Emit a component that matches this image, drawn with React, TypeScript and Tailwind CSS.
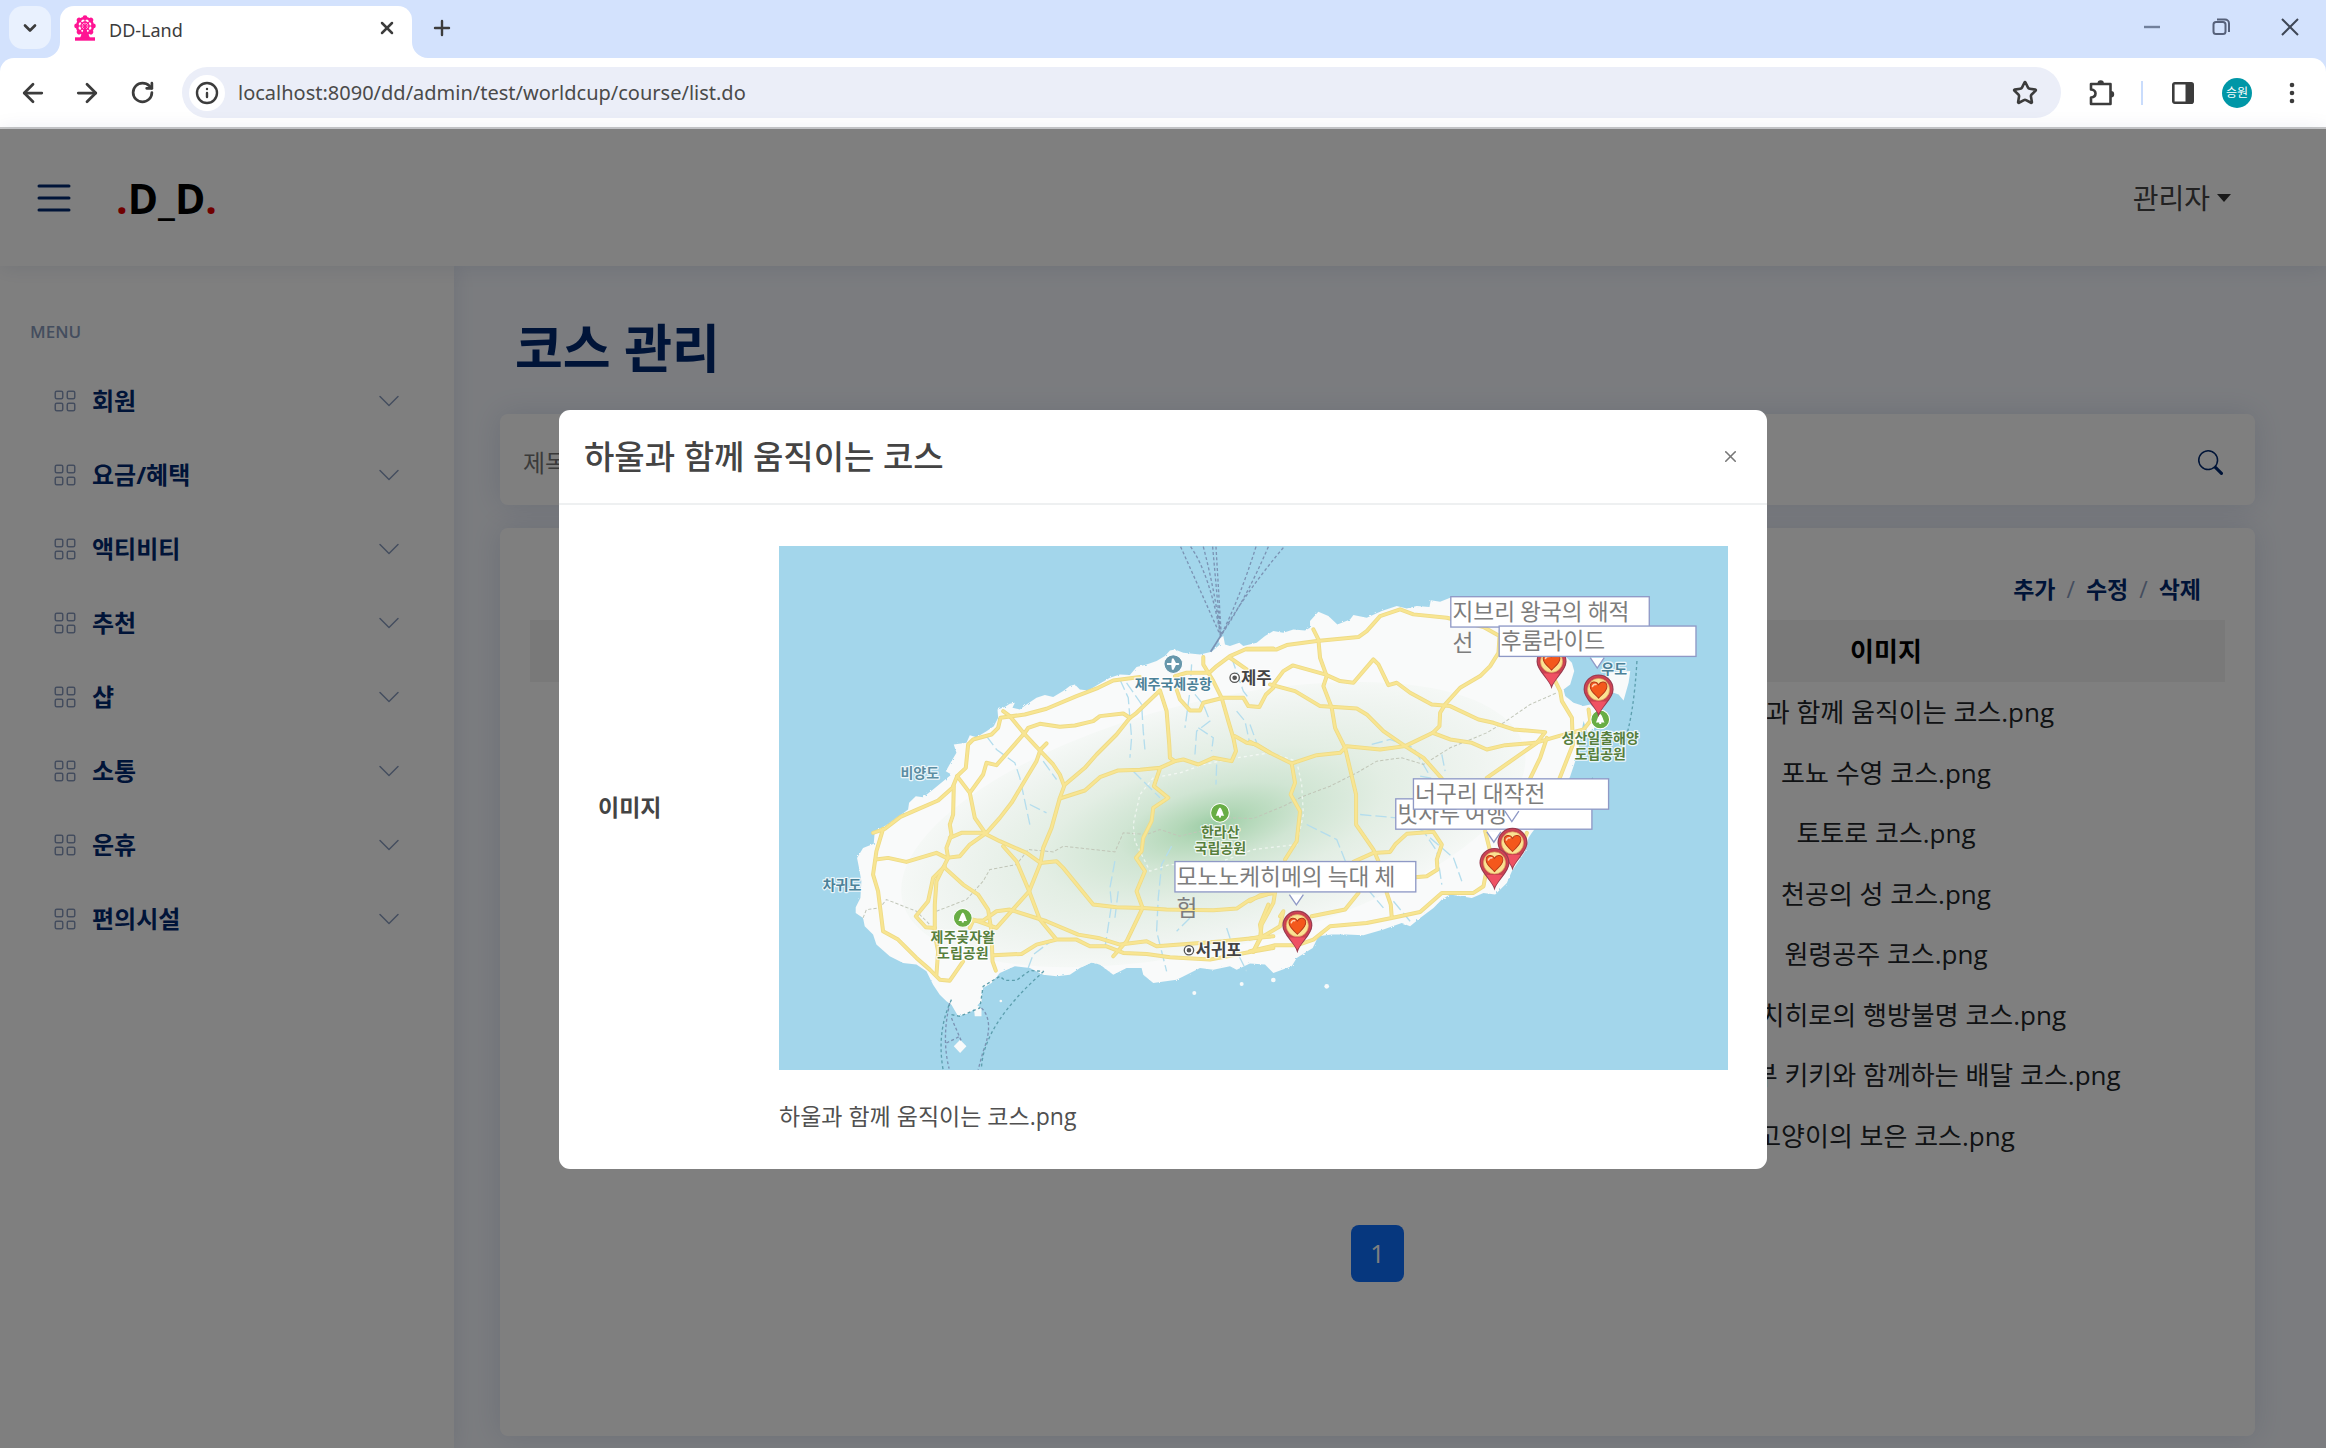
import React from "react";
import { ArrowLeft, ArrowRight, RotateCw, Info, Star, ChevronDown, X, Plus } from "lucide-react";
import { BsGrid, BsChevronDown, BsSearch, BsList } from "react-icons/bs";

const MENU = ["회원", "요금/혜택", "액티비티", "추천", "샵", "소통", "운휴", "편의시설"];

const FILES = [
  "하울과 함께 움직이는 코스.png",
  "포뇨 수영 코스.png",
  "토토로 코스.png",
  "천공의 성 코스.png",
  "원령공주 코스.png",
  "센과 치히로의 행방불명 코스.png",
  "마녀 배달부 키키와 함께하는 배달 코스.png",
  "고양이의 보은 코스.png",
];

function FerrisWheel() {
  const spokes = [0, 45, 90, 135, 180, 225, 270, 315];
  return (
    <svg viewBox="0 0 24 26" className="h-[26px] w-[24px]" fill="#ff1493" stroke="#ff1493" aria-hidden="true">
      <circle cx="12" cy="11" r="8" fill="none" strokeWidth="2.400" />
      <circle cx="12" cy="11" r="4" fill="none" strokeWidth="1.400" />
      {spokes.map((a) => (
        <g key={a} transform={`rotate(${a} 12 11)`}>
          <path d="M12 11V3" strokeWidth="1.200" />
          <circle cx="12" cy="2.600" r="2.400" stroke="none" />
        </g>
      ))}
      <path d="M12 11l-5 12h10z" stroke="none" />
      <path d="M2 24h20" strokeWidth="3.400" />
    </svg>
  );
}

function BrowserChrome() {
  return (
    <header className="bg-[#d3e2fd] text-[#3c3c3c]">
      <div className="flex h-[58px] items-start">
        <button type="button" aria-label="탭 검색" className="mt-[6px] ml-[9px] flex h-[43px] w-[42px] items-center justify-center rounded-[14px] bg-[#e9f1fe]">
          <ChevronDown size={20} strokeWidth={3.2} />
        </button>
        <div className="relative mt-[6px] ml-[9px] flex h-[52px] w-[352px] items-center rounded-t-[14px] bg-white pr-[15px] pb-2 pl-[13px]">
          <svg viewBox="0 0 16 16" className="absolute bottom-0 -left-4 h-4 w-4" aria-hidden="true"><path d="M16 0v16H0A16 16 0 0 0 16 0z" fill="#fff" /></svg>
          <svg viewBox="0 0 16 16" className="absolute -right-4 bottom-0 h-4 w-4" aria-hidden="true"><path d="M0 0v16h16A16 16 0 0 1 0 0z" fill="#fff" /></svg>
          <FerrisWheel />
          <span className="ml-[12px] flex-1 pt-1 font-['Noto_Sans'] text-[18px] leading-6">DD-Land</span>
          <button type="button" aria-label="탭 닫기"><X size={20} strokeWidth={3} /></button>
        </div>
        <button type="button" aria-label="새 탭" className="mt-[16px] ml-[18px]"><Plus size={24} strokeWidth={2.4} /></button>
        <div className="mt-[15px] mr-[24px] ml-auto flex items-center gap-[45px]">
          <button type="button" aria-label="최소화">
            <svg viewBox="0 0 24 24" className="size-6"><path d="M4 12h16" stroke="#71809b" strokeWidth="2.400" /></svg>
          </button>
          <button type="button" aria-label="이전 크기로">
            <svg viewBox="0 0 24 24" className="size-6" fill="none" stroke="#56617a" strokeWidth="2">
              <rect x="4.500" y="7" width="12" height="12" rx="2.500" />
              <path d="M8 4.500h8a4 4 0 0 1 4 4V17" />
            </svg>
          </button>
          <button type="button" aria-label="닫기">
            <svg viewBox="0 0 24 24" className="size-6"><path d="M4 4l16 16M20 4L4 20" stroke="#3f4756" strokeWidth="2" /></svg>
          </button>
        </div>
      </div>
      <div className="flex h-[71px] items-center rounded-t-[14px] border-b-2 border-[#c8c8c8] bg-white pl-[18px]">
        <button type="button" aria-label="뒤로"><ArrowLeft size={30} strokeWidth={2.2} /></button>
        <button type="button" aria-label="앞으로" className="ml-[24px]"><ArrowRight size={30} strokeWidth={2.2} /></button>
        <button type="button" aria-label="새로고침" className="ml-[28px]"><RotateCw size={25} strokeWidth={2.6} /></button>
        <div className="ml-[27px] flex h-[51px] flex-1 items-center rounded-full bg-[#ebeef8] pr-[23px] pl-[7px]">
          <span className="flex size-9 items-center justify-center rounded-full bg-white"><Info size={24} strokeWidth={2.4} /></span>
          <input
            aria-label="주소"
            defaultValue="localhost:8090/dd/admin/test/worldcup/course/list.do"
            className="ml-[13px] h-9 flex-1 bg-transparent font-['Noto_Sans'] text-[20px] text-[#4a4a4a] outline-none"
          />
          <button type="button" aria-label="북마크"><Star size={26} strokeWidth={2.4} /></button>
        </div>
        <div className="flex items-center pr-[20px] pl-[26px]">
          <button type="button" aria-label="확장 프로그램">
            <svg viewBox="0 0 28 28" className="size-7" fill="none" stroke="#3c3c3c" strokeWidth="2.600" strokeLinejoin="round">
              <path d="M4 5h19.500v20H4v-6.500q4.500-.5 4.500-4T4 10.500z" />
              <path d="M10.500 4.500a3.200 3.200 0 0 1 6.400 0zM24 12a3.200 3.200 0 0 1 0 6.400z" fill="#3c3c3c" stroke="none" />
            </svg>
          </button>
          <span className="ml-[26px] h-6 w-[2px] bg-[#c9dcfc]" />
          <button type="button" aria-label="측면 패널" className="ml-[27px]">
            <svg viewBox="0 0 26 26" className="size-[26px]" fill="none" stroke="#3c3c3c" strokeWidth="2.600">
              <rect x="3.300" y="3.300" width="19.400" height="19.400" rx="1.500" />
              <path d="M15.500 3.300h7.200v19.400h-7.200z" fill="#3c3c3c" stroke="none" />
            </svg>
          </button>
          <button type="button" className="ml-[26px] flex size-[30px] items-center justify-center rounded-full bg-[#0097a7] text-[12px] text-white">승원</button>
          <button type="button" aria-label="메뉴" className="ml-[26px]">
            <svg viewBox="0 0 28 28" className="size-7" fill="#3c3c3c"><circle cx="14" cy="6" r="2.300" /><circle cx="14" cy="14" r="2.300" /><circle cx="14" cy="22" r="2.300" /></svg>
          </button>
        </div>
      </div>
    </header>
  );
}

function SiteHeader() {
  return (
    <div className="relative flex h-[137px] items-center bg-white pr-[95px] pl-[30px] shadow-[0_2px_20px_rgba(1,41,112,0.1)]">
      <button type="button" aria-label="메뉴 열기" className="text-[#012970]"><BsList size={48} /></button>
      <a href="#home" className="ml-[38px] text-[41px] leading-[60px] font-bold text-black">
        <span className="text-[#e00000]">.</span>D_D<span className="text-[#e00000]">.</span>
      </a>
      <button type="button" className="ml-auto flex items-center gap-[7px] text-[28px] leading-9 text-[#444]">
        관리자
        <span className="border-x-[7px] border-t-[8px] border-x-transparent border-t-[#333]" />
      </button>
    </div>
  );
}

function Sidebar() {
  return (
    <nav className="w-[454px] shrink-0 bg-white pt-[54px] shadow-[0_0_20px_rgba(1,41,112,0.1)]">
      <p className="pl-[30px] text-[17px] leading-6 font-semibold text-[#899bbd]">MENU</p>
      <ul className="mt-[20px]">
        {MENU.map((m) => (
          <li key={m}>
            <button type="button" className="flex h-[74px] w-full items-center pr-[53px] pl-[53px] text-[#899bbd]">
              <BsGrid size={24} />
              <span className="ml-[15px] text-[24px] font-bold text-[#012970]">{m}</span>
              <BsChevronDown size={24} className="ml-auto" />
            </button>
          </li>
        ))}
      </ul>
    </nav>
  );
}

function CoursePage() {
  return (
    <main className="flex flex-1 flex-col pt-[52px] pr-[71px] pb-[12px] pl-[46px]">
      <h1 className="pl-[15px] text-[52px] leading-[60px] font-bold text-[#012970]">코스 관리</h1>
      <form className="mt-[36px] flex h-[91px] items-center rounded-[8px] bg-white pt-[5px] pr-[32px] pl-[23px] shadow-[0_0_30px_rgba(1,41,112,0.12)]">
        <input aria-label="제목" placeholder="제목" className="h-12 flex-1 text-[24px] outline-none placeholder:text-[#757575]" />
        <button type="submit" aria-label="검색" className="text-[#012970]"><BsSearch size={25} /></button>
      </form>
      <section className="mt-[23px] flex flex-1 flex-col rounded-[8px] bg-white px-[30px] pt-[46px] shadow-[0_0_30px_rgba(1,41,112,0.12)]">
        <div className="flex justify-end gap-[11px] pr-[24px] text-[23px] leading-[30px] font-bold text-[#012970]">
          <a href="#add">추가</a>
          <span className="font-normal text-[#899bbd]">/</span>
          <a href="#edit">수정</a>
          <span className="font-normal text-[#899bbd]">/</span>
          <a href="#delete">삭제</a>
        </div>
        <table className="mt-[16px] h-[546px] w-full table-fixed text-center text-[26px] leading-9 text-[#212529]">
          <thead>
            <tr className="h-[62px] bg-[#f2f2f2] text-black">
              <td className="w-[60%]" />
              <th scope="col" className="w-[40%] font-bold">이미지</th>
            </tr>
          </thead>
          <tbody>
            {FILES.map((f) => (
              <tr key={f}>
                <td />
                <td className="whitespace-nowrap">{f}</td>
              </tr>
            ))}
          </tbody>
        </table>
        <div className="mt-[59px] flex justify-center">
          <button type="button" className="h-[57px] w-[53px] rounded-[8px] bg-[#0d6efd] text-[25px] text-white">1</button>
        </div>
      </section>
    </main>
  );
}

const COAST =
  "M258 1128L272 1100L275 1050L268 1010L262 980L280 950L312 938L315 900L345 885L395 850L415 835L418 815L438 795L460 798L490 775L520 750L545 730L528 720L548 685L560 665L552 640L590 635L600 612L620 618L650 600L672 585L685 560L683 535L705 528L720 518L735 515L728 530L750 535L770 520L800 500L825 492L850 498L880 480L900 465L915 460L930 475L955 478L985 460L1020 440L1050 430L1080 432L1100 408L1130 400L1160 390L1185 375L1200 358L1215 355L1240 365L1290 370L1325 362L1350 340L1345 325L1360 315L1365 340L1380 345L1408 335L1420 345L1460 335L1485 315L1510 300L1540 305L1570 295L1605 298L1620 290L1620 270L1645 242L1675 255L1702 280L1740 265L1750 252L1790 260L1835 240L1880 225L1910 232L1940 225L1978 228L1982 208L2010 212L2040 200L2140 200L2240 240L2320 300L2380 370L2405 395L2412 420L2400 460L2380 475L2385 495L2410 515L2440 525L2460 520L2480 540L2478 585L2452 605L2440 570L2430 620L2425 650L2415 690L2400 735L2370 800L2320 860L2285 905L2275 920L2265 960L2225 1020L2210 1055L2175 1090L2140 1085L2105 1100L2040 1090L2015 1105L1990 1130L1950 1160L1920 1185L1895 1175L1840 1195L1780 1212L1730 1210L1685 1210L1645 1215L1628 1250L1580 1280L1565 1305L1510 1325L1485 1300L1440 1297L1400 1315L1380 1305L1330 1315L1290 1310L1250 1330L1220 1345L1150 1355L1120 1330L1115 1310L1070 1310L1030 1330L990 1300L965 1294L930 1310L900 1330L860 1335L820 1330L780 1310L735 1305L690 1325L665 1355L640 1370L635 1410L600 1445L565 1455L545 1420L530 1410L510 1390L490 1360L470 1320L440 1300L400 1295L360 1275L320 1240L310 1210L285 1185L280 1160L258 1145Z";

const ROADS_NW = [
  "M310 905L345 893L392 857L440 836L505 808L548 770L562 735L588 710L595 640L610 625L665 610L685 590L692 560L765 550L830 533L920 495L985 470L1030 448L1110 438M1215 435L1250 425L1318 425L1340 405L1380 375L1430 353L1510 352",
  "M700 540L720 555L765 610L812 660L850 700L870 730L883 765L870 800L845 890L820 950L812 995L778 1080L720 1145L680 1190L610 1165",
  "M765 605L775 590L810 578L870 587L915 583L970 570L990 555L1060 547L1080 560L1040 610L980 670L945 710L883 762",
  "M1080 560L1100 545L1170 478L1190 540L1198 640L1200 680L1215 690L1240 685L1285 700L1330 680L1385 690L1398 660L1390 620L1375 570L1355 500L1330 450L1300 400L1300 378",
  "M870 802L945 778L990 738L1045 718L1110 716L1170 710L1215 690M1170 712L1152 765L1195 800L1150 830L1145 870L1120 920L1115 960L1098 980L1125 1020L1100 1080L1118 1130L1070 1230L1030 1275",
  "M765 605L680 702L650 695L640 730L600 785L562 735M600 785L615 860L650 910L690 930L770 965L812 995L860 990L880 1010L970 1120L1040 1128L1118 1130L1190 1135L1330 1137L1400 1132L1440 1105L1490 1090",
  "M830 637L812 655L800 690L770 740L725 815L690 860L650 905L600 940L570 975L530 980L500 965L410 992L355 980L318 985",
  "M552 765L550 850L540 880L545 910L530 950L535 980L520 1010L500 1050L495 1120L495 1210L505 1260L500 1330",
  "M645 905L575 905L540 920M525 1005L490 1040L475 1110L438 1155L468 1188L495 1190",
  "M340 893L320 960L310 1030L325 1080L340 1200L385 1225L440 1280L480 1315L510 1345L540 1348L580 1290M340 893",
  "M525 1010L580 1060L625 1090L655 1135L665 1200L668 1290L678 1318M600 1190L610 1168L640 1168L680 1140L720 1135L830 1170L925 1210L985 1220L1050 1240L1130 1230L1160 1245L1230 1240L1360 1230L1440 1222L1510 1215",
  "M700 945L740 990L778 1080L810 1165L860 1225L800 1240L755 1268L670 1272M860 1225L920 1225L960 1245L1010 1245L1060 1265L1130 1268L1200 1278L1320 1285L1440 1262L1510 1250",
  "M1380 380L1430 415M1220 475L1230 505L1260 538L1290 538L1300 515L1360 500L1420 500L1435 525L1468 528L1488 490L1510 470M1395 615L1430 635L1460 640L1500 665",
  "M1495 1120L1470 1180L1475 1215L1450 1262",
];
const ROADS_NE = [
  "M-10 355L80 355L110 342L200 330L325 318L350 300L390 255L450 235L490 250L590 260L700 288L748 315L745 365L720 405L690 435L630 470L585 520L570 545L568 585L548 605L465 645",
  "M190 295L205 325L210 380L230 435L220 465L245 530L255 590L285 650L318 790L318 880L370 955L385 990",
  "M70 460L100 420L128 403L225 430L270 450L310 455L370 385L385 400L415 462L440 455L480 485L545 520L600 525L685 565L730 575L790 595L885 603L860 635L710 740",
  "M60 460L135 480L210 525L320 532L350 550L400 600L465 645L390 655L290 645L270 665L200 672L125 697L60 665L0 632",
  "M465 645L520 680L575 742M548 605L600 625L665 635L710 655L765 642L855 635L925 615L1000 595L1020 570L1015 535M890 620L870 680L840 742",
  "M910 440L930 480L935 510L965 560L968 640L928 742M125 697L135 755L122 790L150 840L140 930L105 985",
];
const ROADS_SE = [
  "M310 182L370 155L420 152L435 130L470 98L550 92L575 130L560 175L562 205L530 225L495 228",
  "M0 412L40 405L90 375L100 330L90 345M185 345L285 325L325 275M410 275L422 310L425 350M0 450L75 432L140 432L190 415L240 375L350 365L425 350L510 332L575 275L670 275L700 255L720 150L705 90",
  "M75 275L70 305L35 370L30 410L10 450M830 95L815 130M0 300L30 282L75 275",
];
const STREAMS = [
  "M650 615L680 655L735 695L750 740L780 880M780 820L830 845M1050 445L1075 500L1085 620L1080 680M1070 455L1115 520L1120 600L1125 655M1265 400L1260 480L1245 590M1275 490L1300 520L1320 570L1280 600L1275 670M1285 590L1330 620L1325 660M1385 380L1420 480L1435 500M1400 540L1425 570L1440 640M1340 700L1338 760M820 690L860 745M1090 720L1170 800",
  "M1035 990L1020 1070L1025 1120L1005 1250M1205 945L1175 1000L1165 1100L1160 1200L1190 1320M1045 1080L1035 1160M1260 1160L1220 1200M775 1310L790 1270L850 1225M1370 1190L1380 1220L1430 1320",
  "M1440 580L1460 635M1805 640L1860 625L1930 650L1980 735M1950 735L2030 750M2015 670L2025 720M1770 850L1880 860L1960 900L2000 960L2015 1060M1610 880L1700 925L1730 1000L1840 1130M1870 1110L1920 1170M1980 920L2050 980L2075 1050",
];

function Pin({ x, y }: { x: number; y: number }) {
  return (
    <g transform={`translate(${x} ${y})`}>
      <path d="M0 76C-8 50-43 28-43 0A43 43 0 0 1 43 0C43 28 8 50 0 76Z" fill="#ea4b5e" stroke="#9b3c50" strokeWidth="4" />
      <path d="M-40 0A40 40 0 0 1 40 0C40 16 28 30 20 40H-20C-28 30-40 16-40 0Z" fill="#c9414f" />
      <path d="M-24 36H24L0 72Z" fill="#ef5163" />
      <circle r="33" fill="#fbe293" stroke="#d9a05a" strokeWidth="2" />
      <path d="M0 26C-10 14-25 6-25-9C-25-24-7-27 0-14C7-27 25-24 25-9C25 6 10 14 0 26Z" fill="#f4581c" stroke="#b8391a" strokeWidth="3" />
      <path d="M-18-9A8 8 0 0 1-8-15" fill="none" stroke="#ffd0b0" strokeWidth="5" strokeLinecap="round" />
    </g>
  );
}

function Park({ x, y }: { x: number; y: number }) {
  return (
    <g transform={`translate(${x} ${y})`}>
      <circle r="28" fill="#68ad45" stroke="#fff" strokeWidth="3" />
      <path d="M0-16C8-10 8 2 13 9H3V14H-3V9H-13C-8 2-8-10 0-16Z" fill="#fff" />
    </g>
  );
}

function MapText({ x, y, fill, size = 42, children }: { x: number; y: number; fill: string; size?: number; children: string }) {
  return (
    <text x={x} y={y} fontSize={size} fontWeight="bold" textAnchor="middle" fill={fill} stroke="#fff" strokeWidth="7" strokeOpacity="0.8" strokeLinejoin="round" paintOrder="stroke">
      {children}
    </text>
  );
}

function Callout({ x, y, w, label, rest }: { x: number; y: number; w: number; label: string; rest?: string }) {
  return (
    <g>
      <rect x={x} y={y} width={w} height="91" fill="#fff" stroke="#8f99c6" strokeWidth="4" />
      <text x={x + 5} y={y + 69} fontSize="68" fill="#7d7d7d">{label}</text>
      {rest && <text x={x + 5} y={y + 164} fontSize="68" fill="#7d7d7d">{rest}</text>}
    </g>
  );
}

function Arrow({ x, y }: { x: number; y: number }) {
  return <path d={`M${x - 21} ${y}L${x} ${y + 31}L${x + 21} ${y}`} fill="#fff" stroke="#8f99c6" strokeWidth="4" />;
}

function JejuMap() {
  return (
    <svg viewBox="28 45 2845 1571" className="block w-full font-['Noto_Sans_CJK_KR','Open_Sans',sans-serif]" role="img" aria-label="제주도 코스 지도">
      <defs>
        <radialGradient id="terrain">
          <stop offset="0" stopColor="#9ccda5" />
          <stop offset="0.12" stopColor="#b4d8b9" />
          <stop offset="0.3" stopColor="#d0e5d3" />
          <stop offset="0.55" stopColor="#e3eee4" />
          <stop offset="0.85" stopColor="#eff4f0" />
          <stop offset="1" stopColor="#f5f8f6" />
        </radialGradient>
        <filter id="rough" x="-5%" y="-5%" width="110%" height="110%">
          <feTurbulence type="fractalNoise" baseFrequency="0.12" numOctaves="2" seed="4" />
          <feDisplacementMap in="SourceGraphic" scale="7" />
        </filter>
        <clipPath id="island"><path d={COAST} /></clipPath>
      </defs>
      <rect x="28" y="45" width="2845" height="1571" fill="#a3d6eb" />
      <path d={COAST} fill="#f9fafa" filter="url(#rough)" />
      <g clipPath="url(#island)">
        <ellipse cx="1330" cy="880" rx="960" ry="370" fill="url(#terrain)" transform="rotate(-14 1330 880)" />
      </g>
      <g fill="#f8fafa">
        <path d="M2515 425L2580 420L2575 455L2560 508L2545 490L2515 480Z" />
        <path d="M571 1525L590 1545L571 1565L552 1545Z" />
        <path d="M620 1420L635 1430L635 1455L615 1455L612 1430Z" />
        <circle cx="1273" cy="1385" r="6" />
        <circle cx="1415" cy="1358" r="6" />
        <circle cx="1510" cy="1346" r="7" />
        <circle cx="1670" cy="1365" r="7" />
        <circle cx="693" cy="1409" r="4" />
      </g>
      <g fill="none" stroke="#b4dded" strokeWidth="4">
        {STREAMS.map((d) => <path key={d} d={d} strokeDasharray="34 12" />)}
      </g>
      <g fill="none" stroke="#c1c6b8" strokeWidth="3" strokeDasharray="10 6">
        <path d="M280 1160L290 1135L330 1130L350 1105L440 1140L480 1180M500 1140L590 1105L640 1050L660 1015L740 1000L775 955L850 962L880 945L1035 962L1060 905L1130 910L1170 895L1230 915L1330 890L1380 860L1450 862L1540 825L1600 795L1680 765L1760 725L1820 690L1895 680L1960 700L2040 650L2150 605L2200 575L2280 520L2360 485" />
      </g>
      <g fill="none" stroke="#fff" strokeWidth="4" strokeDasharray="9 9" opacity="0.6">
        <path d="M1095 930L1090 880L1110 790L1150 740L1230 725L1300 700L1400 680L1500 665L1580 690L1595 760L1600 850L1580 940L1450 955L1330 1000L1200 1000L1140 1020L1095 930" />
      </g>
      <g fill="none" stroke="#eedb86" strokeWidth="12" strokeLinejoin="round" strokeLinecap="round">
        {ROADS_NW.map((d) => <path key={d} d={d} />)}
        <g transform="translate(1440 0)">{ROADS_NE.map((d) => <path key={d} d={d} />)}</g>
        <g transform="translate(1440 810)">{ROADS_SE.map((d) => <path key={d} d={d} />)}</g>
      </g>
      <g fill="none" stroke="#f8e592" strokeWidth="7" strokeLinejoin="round" strokeLinecap="round">
        {ROADS_NW.map((d) => <path key={d} d={d} />)}
        <g transform="translate(1440 0)">{ROADS_NE.map((d) => <path key={d} d={d} />)}</g>
        <g transform="translate(1440 810)">{ROADS_SE.map((d) => <path key={d} d={d} />)}</g>
      </g>
      <g fill="none" stroke="#7b93b4" strokeWidth="4" strokeDasharray="9 7">
        <path d="M1232 47L1352 315M1262 47Q1320 130 1352 315M1300 47Q1335 180 1352 315M1328 47L1352 315M1338 47L1354 315M1458 47Q1410 200 1352 315M1495 47Q1430 200 1352 315M1540 50Q1430 180 1352 315" />
        <path d="M540 1415Q515 1520 538 1612M545 1460L575 1530M530 1535L570 1515M635 1430Q675 1470 640 1560L625 1615" />
        <path d="M1352 315L1322 362" strokeDasharray="none" strokeWidth="5" />
      </g>
      <g fill="none" stroke="#5d9fae" strokeWidth="4" strokeDasharray="9 8">
        <path d="M545 1405Q500 1500 520 1615M822 1320Q640 1480 635 1610M545 1450L570 1455L630 1430L640 1365L690 1335L705 1347L740 1347L780 1318L822 1320" />
        <path d="M2600 390Q2590 560 2560 640M2465 740L2475 755L2520 745" />
      </g>
      <g>
        <circle cx="1210" cy="399" r="28" fill="#6797ab" stroke="#fff" strokeWidth="3" />
        <path d="M1191 396H1204L1206 382H1211L1218 396H1226Q1231 399 1226 402H1218L1211 416H1206L1204 402H1191Z" fill="#fff" />
      </g>
      <MapText x={1210} y={474} fill="#4b8198">제주국제공항</MapText>
      <MapText x={450} y={741} fill="#5b8da3">비양도</MapText>
      <MapText x={217} y={1076} fill="#4b8198">차귀도</MapText>
      <g fill="#fff" stroke="#555" strokeWidth="4">
        <circle cx="1394" cy="440" r="14" /><circle cx="1394" cy="440" r="5" fill="#555" />
        <circle cx="1257" cy="1257" r="14" /><circle cx="1257" cy="1257" r="5" fill="#555" />
      </g>
      <MapText x={1459} y={458} size={50} fill="#444">제주</MapText>
      <MapText x={1346} y={1275} size={50} fill="#444">서귀포</MapText>
      <Park x={1350} y={845} />
      <MapText x={1351} y={918} fill="#577f3d">한라산</MapText>
      <MapText x={1351} y={964} fill="#577f3d">국립공원</MapText>
      <Park x={579} y={1160} />
      <MapText x={579} y={1232} fill="#577f3d">제주곶자왈</MapText>
      <MapText x={579} y={1279} fill="#577f3d">도립공원</MapText>
      <Park x={2490} y={565} />
      <MapText x={2490} y={637} fill="#577f3d">성산일출해양</MapText>
      <MapText x={2490} y={684} fill="#577f3d">도립공원</MapText>
      <MapText x={2532} y={428} fill="#4b8198">우도</MapText>
      <Pin x={2344} y={391} />
      <Pin x={2485} y={475} />
      <Arrow x={2481} y={380} />
      <Callout x={2042} y={197} w={595} label="지브리 왕국의 해적" rest="선" />
      <Callout x={2187} y={285} w={590} label="후룸라이드" />
      <Callout x={1877} y={803} w={588} label="빗자루 여행" />
      <Callout x={1930} y={743} w={585} label="너구리 대작전" />
      <Arrow x={2225} y={840} />
      <Arrow x={2171} y={902} />
      <Pin x={2227} y={935} />
      <Pin x={2173} y={995} />
      <Callout x={1215} y={991} w={722} label="모노노케히메의 늑대 체" rest="험" />
      <Arrow x={1579} y={1090} />
      <Pin x={1582} y={1183} />
    </svg>
  );
}

function CourseModal() {
  return (
    <div className="absolute inset-0 flex items-start justify-center bg-black/50 pt-[281px]">
      <div role="dialog" aria-modal="true" aria-labelledby="course-title" className="w-full max-w-[1208px] rounded-[11px] bg-white text-[#444]">
        <div className="flex h-[95px] items-center justify-between border-b-2 border-[#eef0f1] pr-[27px] pl-[25px]">
          <h2 id="course-title" className="text-[33px] leading-[48px] font-medium">하울과 함께 움직이는 코스</h2>
          <button type="button" aria-label="닫기" className="text-[#777]"><X size={19} strokeWidth={2} /></button>
        </div>
        <div className="flex items-center pt-[41px] pr-[39px] pb-[35px] pl-[39px]">
          <p className="w-[181px] shrink-0 pb-[66px] text-[23px] leading-[36px] font-bold">이미지</p>
          <div className="flex-1">
            <JejuMap />
            <p className="mt-[28px] text-[23px] leading-[36px] text-[#505050]">하울과 함께 움직이는 코스.png</p>
          </div>
        </div>
      </div>
    </div>
  );
}

export default function App() {
  return (
    <div className="flex min-h-screen flex-col font-['Open_Sans','Noto_Sans_CJK_KR',sans-serif]">
      <BrowserChrome />
      <div className="relative flex flex-1 flex-col bg-[#f6f9ff]">
        <SiteHeader />
        <div className="flex flex-1">
          <Sidebar />
          <CoursePage />
        </div>
        <CourseModal />
      </div>
    </div>
  );
}
